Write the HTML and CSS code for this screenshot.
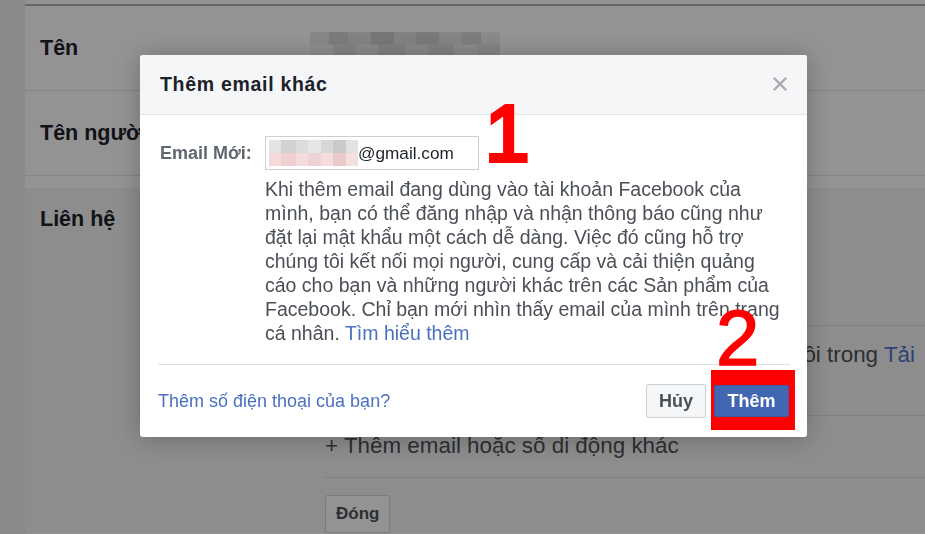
FILE: index.html
```html
<!DOCTYPE html>
<html lang="vi">
<head>
  <meta charset="UTF-8">
  <meta name="viewport" content="width=device-width, initial-scale=1.0">
  <title>Cài đặt tài khoản chung</title>
  <link rel="stylesheet" href="styles.css">
</head>
<body>
  <div class="page">
    <aside class="rail"></aside>

    <main class="settings">
      <div class="row">
        <div class="row-label">Tên</div>
        <div class="row-value"><span class="blurred-name"></span></div>
      </div>

      <div class="row">
        <div class="row-label">Tên người dùng</div>
        <div class="row-value"></div>
      </div>

      <div class="row row-open">
        <div class="row-label">Liên hệ</div>
        <div class="row-body">
          <div class="contact-intro">
            <p>Email chính</p>
            <p>Số di động</p>
            <p>Email phụ</p>
            <p>Đã xác nhận</p>
          </div>
          <div class="contact-note">
            <div class="note-line">Xem email đã xóa rồi trong <a href="#">Tải</a></div>
            <div><a href="#">thông tin của bạn</a>.</div>
          </div>
          <div class="add-contact">+ Thêm email hoặc số di động khác</div>
          <div class="close-row">
            <button class="btn-plain">Đóng</button>
          </div>
        </div>
      </div>
    </main>
  </div>

  <div class="backdrop"></div>

  <div class="dialog">
    <div class="dialog-header">
      <h2>Thêm email khác</h2>
      <button class="dialog-close" aria-label="Đóng">
        <svg width="14" height="14" viewBox="0 0 14 14">
          <path d="M1.5 1.5 L12.5 12.5 M12.5 1.5 L1.5 12.5" stroke="#a7a9ad" stroke-width="2.4" stroke-linecap="round"/>
        </svg>
      </button>
    </div>

    <div class="dialog-body">
      <div class="form-line">
        <label>Email Mới:</label>
        <div class="field">
          <div class="email-field"><span class="blur"></span>@gmail.com</div>
          <p class="hint">Khi thêm email đang dùng vào tài khoản Facebook của mình, bạn có thể đăng nhập và nhận thông báo cũng như đặt lại mật khẩu một cách dễ dàng. Việc đó cũng hỗ trợ chúng tôi kết nối mọi người, cung cấp và cải thiện quảng cáo cho bạn và những người khác trên các Sản phẩm của Facebook. Chỉ bạn mới nhìn thấy email của mình trên trang cá nhân. <a href="#">Tìm hiểu thêm</a></p>
        </div>
      </div>
    </div>

    <div class="dialog-footer">
      <a href="#" class="phone-link">Thêm số điện thoại của bạn?</a>
      <div class="actions">
        <button class="btn-cancel">Hủy</button>
        <span class="highlight"><button class="btn-primary">Thêm</button></span>
      </div>
    </div>

    <span class="mark mark-one">1</span>
    <span class="mark mark-two">2</span>
  </div>
</body>
</html>
```

FILE: styles.css
```css
body {
  margin: 0;
  font-family: "Liberation Sans", Arial, sans-serif;
  background: #f5f5f5;
  color: #1d2129;
  overflow: hidden;
}
a {
  color: #4a70c0;
  text-decoration: none;
}
p {
  margin: 0;
}
button {
  font-family: inherit;
  cursor: pointer;
}

/* page under the dialog */
.page {
  display: flex;
  height: 534px;
}
.rail {
  width: 25px;
  flex-shrink: 0;
  background: #e6e6e6;
}
.settings {
  flex: 1;
  margin-top: 4px;
  border-top: 2px solid #b0b0b0;
}
.row {
  display: flex;
  align-items: center;
  height: 84px;
  border-bottom: 1px solid #dcdcdc;
}
.row-label {
  width: 285px;
  padding-left: 15px;
  font-size: 21.5px;
  font-weight: bold;
  white-space: nowrap;
}
.row-value {
  flex: 1;
}
.blurred-name {
  display: block;
  width: 190px;
  height: 25px;
  margin: -8px 0 0 -15px;
  background:
    linear-gradient(90deg, #e2e2e2 0 10%, #cfcfcf 10% 20%, #dadada 20% 32%, #c7c7c7 32% 44%, #d9d9d9 44% 56%, #cbcbcb 56% 68%, #dedede 68% 80%, #d2d2d2 80% 90%, #e6e6e6 90%) top / 100% 50% no-repeat,
    linear-gradient(90deg, #ececec 0 12%, #dcdcdc 12% 24%, #e6e6e6 24% 36%, #d6d6d6 36% 50%, #e4e4e4 50% 62%, #d8d8d8 62% 76%, #e8e8e8 76% 88%, #dedede 88%) bottom / 100% 50% no-repeat;
}
.row-open {
  display: flex;
  align-items: flex-start;
  height: auto;
  margin-top: 12px;
  border-bottom: none;
  background: #ebebeb;
}
.row-open .row-label {
  padding-top: 18px;
  line-height: 26px;
}
.row-body {
  flex: 1;
  min-width: 0;
  font-size: 22.4px;
  line-height: 26px;
  color: #4b4f56;
}
.contact-intro {
  padding: 18px 0 15px;
  border-bottom: 1px solid #d6d6d6;
}
.contact-note {
  padding: 16px 0 21px;
  border-bottom: 1px solid #d6d6d6;
}
.note-line {
  text-align: right;
  white-space: nowrap;
  padding-right: 10px;
}
.add-contact {
  padding: 17px 0 18px;
  border-bottom: 1px solid #d6d6d6;
}
.close-row {
  padding-top: 17px;
}
.btn-plain {
  height: 38px;
  padding: 0 10px;
  font-size: 17px;
  font-weight: bold;
  color: #4b4f56;
  background: #f5f6f7;
  border: 1px solid #ccd0d5;
  border-radius: 2px;
}

/* dialog */
.backdrop {
  position: fixed;
  inset: 0;
  background: rgba(0, 0, 0, 0.4);
}
.dialog {
  position: fixed;
  left: 140px;
  top: 55px;
  width: 667px;
  background: #fff;
  border-radius: 3px;
  box-shadow: 0 2px 26px rgba(0, 0, 0, 0.25);
}
.dialog-header {
  position: relative;
  height: 59px;
  padding: 0 20px;
  display: flex;
  align-items: center;
  background: #f5f6f7;
  border-bottom: 1px solid #e5e5e5;
  border-radius: 3px 3px 0 0;
}
.dialog-header h2 {
  margin: 0;
  font-size: 19.5px;
  letter-spacing: 0.7px;
  font-weight: bold;
  color: #1d2129;
}
.dialog-close {
  position: absolute;
  right: 20px;
  top: 22px;
  width: 14px;
  height: 14px;
  padding: 0;
  border: none;
  background: none;
}
.dialog-close svg {
  display: block;
}
.dialog-body {
  margin: 0 17px 0 18px;
  padding: 21px 0 19px 2px;
  border-bottom: 1px solid #dddfe2;
}
.form-line {
  display: flex;
}
.form-line label {
  width: 105px;
  flex-shrink: 0;
  line-height: 34px;
  font-size: 18px;
  font-weight: bold;
  color: #606770;
}
.field {
  width: 517px;
}
.email-field {
  display: flex;
  align-items: center;
  box-sizing: border-box;
  width: 214px;
  height: 34px;
  padding-left: 3px;
  border: 1px solid #ccd0d5;
  font-size: 17.2px;
  color: #1d2129;
}
.blur {
  width: 89px;
  height: 26px;
  background:
    linear-gradient(90deg, #e4e4e6 0 14%, #d2d2d4 14% 30%, #dcdcde 30% 44%, #e6e6e8 44% 58%, #d8d8da 58% 72%, #cacacc 72% 86%, #e2e2e4 86%) top / 100% 50% no-repeat,
    linear-gradient(90deg, #f6d9da 0 14%, #f0cfd0 14% 30%, #f3dcdd 30% 44%, #efd2d3 44% 58%, #f5dcdd 58% 72%, #ecc9ca 72% 86%, #f4e0e1 86%) bottom / 100% 50% no-repeat;
}
.hint {
  margin-top: 7px;
  font-size: 19.5px;
  line-height: 24px;
  color: #4b4f56;
}
.dialog-footer {
  height: 72px;
  padding: 0 18px;
  display: flex;
  align-items: center;
  justify-content: space-between;
}
.phone-link {
  font-size: 18px;
}
.actions {
  display: flex;
  align-items: center;
  gap: 8px;
}
.btn-cancel {
  height: 34px;
  width: 60px;
  padding: 0;
  font-size: 18px;
  font-weight: bold;
  color: #4b4f56;
  background: #f5f6f7;
  border: 1px solid #ccd0d5;
  border-radius: 2px;
}
.highlight {
  display: block;
  padding: 15px 6px 13px 3px;
  margin: -15px -6px -13px -3px;
  background: #ff0000;
}
.btn-primary {
  display: block;
  height: 32px;
  width: 75px;
  padding: 0;
  font-size: 18px;
  font-weight: bold;
  color: #fff;
  background: #4267b2;
  border: 1px solid #3b5da0;
  border-radius: 2px;
}

/* annotation marks */
.mark {
  position: absolute;
  line-height: 1;
  color: #f00;
}
.mark-one {
  left: 345px;
  top: 39px;
  font-size: 80px;
  -webkit-text-stroke: 4px #f00;
}
.mark-two {
  left: 576px;
  top: 244px;
  font-size: 78px;
  -webkit-text-stroke: 1.5px #f00;
}
```
